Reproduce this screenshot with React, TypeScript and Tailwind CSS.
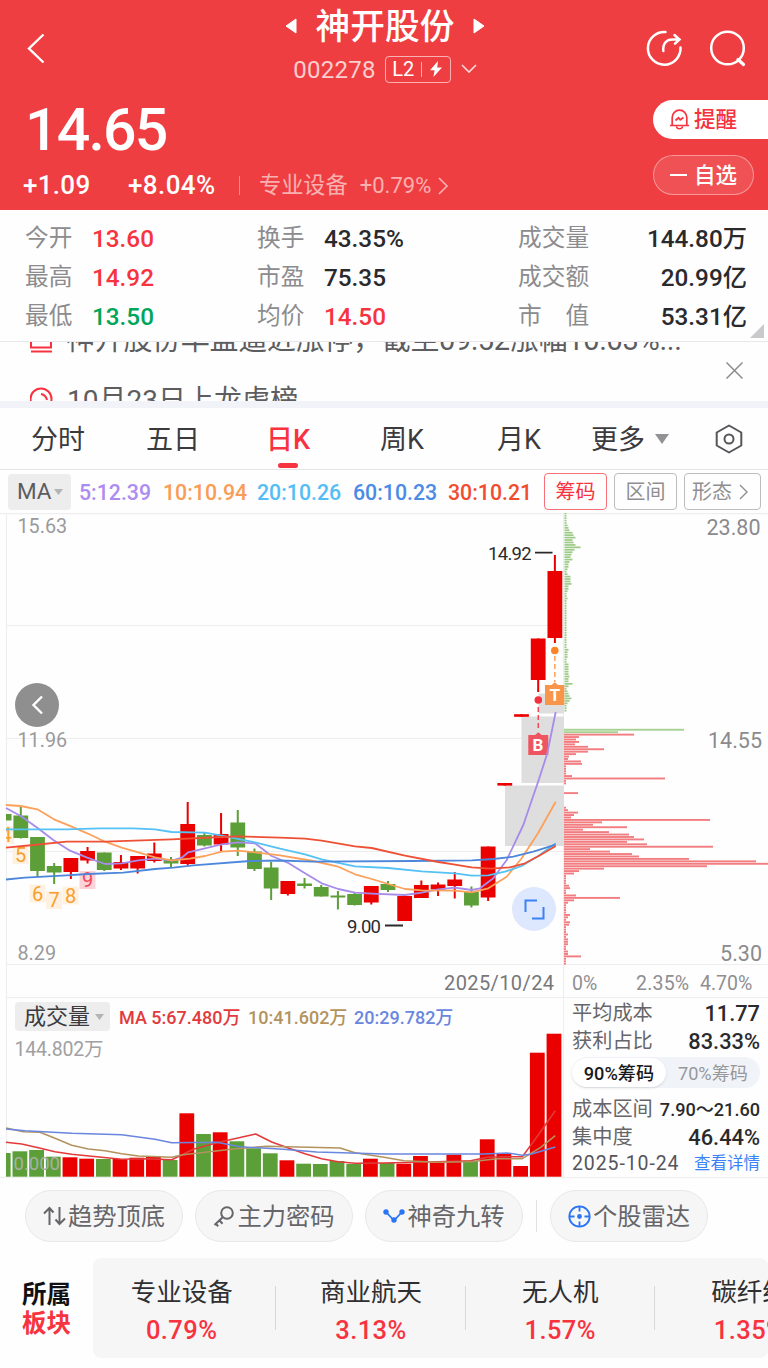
import type { ReactNode } from "react";

const UP = "#eb0000";
const DOWN = "#5c9e38";

// x of the first full candle and the distance between two candles
const FIRST_X = 20.8;
const STEP = 16.69;

// [body top, body bottom, high, low, rising, volume top]
const candles: [number, number, number, number, boolean, number][] = [
  [814, 820.5, 814, 820.5, false, 1153],
  [815.5, 838, 807, 838.5, false, 1151.3],
  [837, 871, 837, 877, false, 1150],
  [866, 872.5, 863, 884, false, 1156.7],
  [858, 872, 858, 879, true, 1157.3],
  [851, 860.5, 847, 863.5, true, 1158.7],
  [852.5, 870, 852.5, 871, false, 1159],
  [862, 868.5, 855, 870, true, 1159],
  [856, 868.5, 856, 873.5, true, 1157.7],
  [853.5, 861, 842.5, 862.5, true, 1156.3],
  [859, 863.5, 857, 868, false, 1160],
  [824, 864, 802, 865, true, 1113.3],
  [835, 845.5, 833, 846.5, false, 1134],
  [834, 844.5, 813, 851.5, true, 1132.3],
  [822.5, 847.5, 810, 856, false, 1141.3],
  [851.5, 869, 848.5, 871, false, 1148.3],
  [867.5, 888.5, 862, 900, false, 1153.3],
  [881, 894, 881, 895.5, true, 1160.3],
  [883.5, 886, 878, 888.5, false, 1163.7],
  [887, 896.5, 885, 896.5, false, 1164],
  [895.5, 897.5, 891, 909.5, false, 1161],
  [894, 905, 893, 905.5, false, 1164],
  [886, 902.5, 886, 904.5, true, 1158.7],
  [884, 890, 881, 892, false, 1163],
  [896, 921, 894.5, 921, true, 1163.7],
  [885, 898, 880.5, 898, true, 1156],
  [884.5, 889.5, 882.5, 896, true, 1163],
  [879.5, 886, 872, 898.5, true, 1154.7],
  [892, 905.5, 886.5, 907.5, false, 1160.7],
  [846.5, 897.5, 846.5, 901, true, 1139.3],
  [783, 785.6, 783, 785.6, true, 1154],
  [714.2, 716.8, 714.2, 716.8, true, 1166],
  [638.5, 680, 638.5, 692, true, 1052.7],
  [571, 638, 555, 643, true, 1033.7],
];

const maLines = [
  {
    color: "#a78bea",
    points:
      "6,808 20.7,816 37.3,827.7 53.3,840 70,850.7 87.3,857.7 105,864 121.7,863.3 138.3,860.3 155,858.7 171.7,860.7 181.7,857.7 188.3,852.3 205,848.3 221.7,844.3 238.3,842.3 255,843.3 271.7,856 288.3,863 305,873.3 321.7,883.3 338.3,889 355,892.7 371.7,893.7 405,895 421.7,892.7 438.3,889.3 455,887.7 471.7,890 480,888.3 493.3,878.3 506.7,860 523.3,825 538.7,780 547.3,753.3 555.7,712",
  },
  {
    color: "#fba15c",
    points:
      "6,805 20.7,806 37.3,809.3 54,819.3 71.7,826.7 87.3,833.3 105,841.7 121.7,847.7 138.3,852.3 155,857.3 171.7,860.3 190,858.7 205,856 221.7,851.7 238.3,850.7 255,852.3 280,855.3 313.3,861 338.3,866.7 355,874.3 371.7,879 388.3,884 405,889 421.7,890.3 455,890.7 471.7,892.3 488.3,888.3 506.7,876.7 521.7,858.3 538.3,832.7 555.7,801.7",
  },
  {
    color: "#55c1f5",
    points:
      "6,829.3 66.7,829.3 100,828.3 133.3,828.3 155,829.3 171.7,832 205,832.7 221.7,835.7 255,842.3 280,848.7 305,854.3 321.7,859.3 355,866.3 388.3,868 421.7,871.3 455,873.3 471.7,875.7 488.3,875.3 505,871.7 521.7,866 538.3,856 555.7,843.3",
  },
  {
    color: "#4d87dc",
    points:
      "6,879.5 25,877.7 66.7,875.3 88.3,874 123.3,872.7 155,869 173.3,867.7 193.3,865.3 250,861 280,860.5 313.3,861.7 413.3,861 471.7,860.3 493.3,859 513.3,856.7 533.3,851.7 555.7,844.7",
  },
  {
    color: "#ee5036",
    points:
      "6,847.7 33.3,845 66.7,841.7 105,841.7 171.7,839.3 221.7,837 238.3,836.3 280,837.7 305,838.7 321.7,840.7 355,846.3 371.7,848 405,855.7 438.3,862 455,864.7 471.7,867.3 490,868.7 510,867.3 525,863.3 540,855.3 555.7,846",
  },
];

const volumeLines = [
  {
    color: "#e23a3c",
    points:
      "6,1142.3 21.7,1144 38.3,1147.7 55,1151.7 71.7,1154.3 121.7,1159.3 146.7,1158.7 171.7,1159.7 180,1155.7 193.3,1149.3 216.7,1142.7 255.7,1134 271.7,1142 288.3,1148 305,1153.7 321.7,1158.7 338.3,1161.7 355,1163.3 384,1163 437.3,1161.7 470.7,1160.7 487.3,1157.3 507.3,1156.7 522.3,1156.7 539,1134 555.3,1110.7",
  },
  {
    color: "#b3935d",
    points:
      "6,1128 23.3,1131.7 40,1132.3 55,1138.3 71.7,1145.3 88.3,1149 105,1150.7 121.7,1153.7 138.3,1156 171.7,1157.3 183.3,1154.7 233.3,1149 266.7,1146.3 340,1148 355,1152.7 384,1157.3 404,1160.7 437.3,1162.3 470.7,1161.7 497.3,1158.7 522.3,1158.7 540.7,1147.3 555.3,1135.7",
  },
  {
    color: "#6a86df",
    points:
      "6,1129 25,1130.7 71.7,1133.3 121.7,1134.7 138.3,1137 155,1139.3 171.7,1142.7 216.7,1142.3 240,1146.7 283.3,1149.3 316.7,1152 384,1154 484,1154 507.3,1153 522.3,1155.3 530.7,1154.3 555.3,1147",
  },
];

const chipsAbove = [
  2, 2, 2, 2, 2, 3, 4, 5, 8, 9, 11, 8, 9, 11, 16, 10, 8, 7, 6, 8, 5, 4, 4, 3, 2,
  3, 6, 6, 6, 7, 4, 4, 3, 2, 2, 3, 2, 2, 2, 2, 2, 2, 2, 2, 2, 2, 2, 2, 2, 2, 2, 2,
  2, 2, 2, 2, 4, 3, 3, 3, 2, 2, 4, 4, 4, 4, 4, 5, 4, 4, 8, 4, 2, 3, 4, 5, 7, 5, 3,
  2, 2, 2,
];

const chipsBelow = [
  120, 54, 70, 15, 12, 15, 11, 24, 40, 24, 12, 5, 4, 17, 18, 2, 2, 2, 2, 8, 101,
  2, 2, 0, 0, 0, 14, 0, 0, 0, 0, 0, 2, 4, 14, 10, 7, 146, 38, 29, 63, 19, 45, 65,
  70, 80, 63, 83, 149, 26, 46, 68, 75, 125, 192, 204, 143, 40, 15, 10, 2, 2, 2,
  2, 5, 6, 2, 2, 12, 56, 10, 4, 2, 2, 2, 2, 6, 4, 2, 6, 5, 2, 2, 2, 4, 2, 4, 4, 4,
  2, 2, 4, 4, 17, 2, 2, 2,
];

const Header = () => (
  <header className="flex h-[210px] flex-col bg-[#ef3e41] text-white">
    <div className="flex h-[97px] items-start justify-between pr-[22px] pl-[27px]">
      <svg width="100" height="97" fill="none" stroke="currentColor" strokeWidth="2.4">
        <path d="M16.5 34.5 2 48.5l14.500 14" />
      </svg>
      <div className="flex flex-col items-center pt-[5px] pr-[3px]">
        <div className="flex h-[42px] items-center gap-[19px]">
          <svg width="12" height="16" fill="currentColor">
            <path d="M11 1v14L1 8Z" stroke="currentColor" strokeLinejoin="round" />
          </svg>
          <h1 className="pt-[2px] text-[34.7px] leading-[42px] font-medium">神开股份</h1>
          <svg width="12" height="16" fill="currentColor">
            <path d="M1 1v14l10-7Z" stroke="currentColor" strokeLinejoin="round" />
          </svg>
        </div>
        <div className="mt-[6px] flex h-[32px] items-center">
          <span className="pt-[2px] text-[24px] tracking-[0.3px] text-white/75">002278</span>
          <span className="ml-[9px] flex h-[27px] w-[66px] items-center justify-center gap-[7px] rounded border border-white/60 text-[20px]">
            L2
            <i className="h-[15px] w-px bg-white/60" />
            <svg width="14" height="16" fill="currentColor">
              <path d="M9 0 1 9.2h4.600L4.400 16 13 6.400H8.200Z" />
            </svg>
          </span>
          <svg className="ml-[10px]" width="16" height="10" fill="none" stroke="#ffffffcc" strokeWidth="1.6">
            <path d="m1 1 7 7 7-7" />
          </svg>
        </div>
      </div>
      <svg className="mt-[28px]" width="100" height="42" fill="none" stroke="currentColor" strokeWidth="2.5" strokeLinecap="round">
        <path d="M19.500 4.100A16.300 16.300 0 1 0 34.500 19.500" />
        <path d="M17.300 23c-.6-7.500 3-11.500 9.200-11.500h7M28.500 7l5 4.500-4.500 4.200" />
        <circle cx="81.500" cy="20" r="16.300" />
        <path d="m92 31.500 5.500 5" strokeWidth="3.200" />
      </svg>
    </div>
    <div className="flex h-[113px] justify-between">
      <div className="flex flex-col">
        <strong className="pt-[3px] pl-[25px] text-[59px] leading-[60px] font-medium tracking-[-1.8px]">
          14.65
        </strong>
        <div className="flex h-[34px] items-center pt-[17px] pl-[23px] text-[26px]">
          <span className="w-[105px] font-medium tracking-[0.3px]">+1.09</span>
          <span className="w-[111px] font-medium tracking-[0.4px]">+8.04%</span>
          <i className="h-[19px] w-px bg-white/40" />
          <span className="pl-[19px] text-[22.2px] text-white/60">专业设备</span>
          <span className="pl-[12px] text-[22px] text-white/60">+0.79%</span>
          <svg className="ml-[6px]" width="12" height="18" fill="none" stroke="#ffffff99" strokeWidth="1.6">
            <path d="m2 1 8 8-8 8" />
          </svg>
        </div>
      </div>
      <div className="flex w-[115px] flex-col gap-[16px] pt-[3px]">
        <button className="flex h-[39px] items-center rounded-l-full bg-white pl-[16px] text-[21.6px] font-medium text-[#f5333f]">
          <svg width="21" height="23" fill="none" stroke="currentColor" strokeWidth="1.7">
            <path d="M1 17.500h19M3.200 17V9.500a7.300 7.300 0 0 1 14.600 0V17M7.500 18.500c.4 3 5.600 3 6 0M6.500 12.500l3-2.700 1.700 2 3.300-2.300" />
          </svg>
          <span className="pt-[2px] pl-[4px]">提醒</span>
        </button>
        <button className="mr-[14px] flex h-[40px] items-center rounded-full border border-white/40 bg-white/10 pl-[16px] text-[21.5px] font-medium">
          <i className="mr-[7px] h-[2px] w-[17px] bg-white" />
          <span className="pt-[2px]">自选</span>
        </button>
      </div>
    </div>
  </header>
);

const Quote = ({ label, value, tone = "text-[#2a2a2d]", width = "" }: {
  label: string;
  value: string;
  tone?: string;
  width?: string;
}) => (
  <div className="flex h-[39px] items-center leading-[28px]">
    <span className={`text-[23.7px] whitespace-pre text-[#8c8c8f] ${width}`}>{label}</span>
    <span className={`pt-[2px] text-[24.3px] font-medium ${tone}`}>{value}</span>
  </div>
);

const Quotes = () => (
  <section className="relative grid h-[132px] grid-cols-[232px_261px_1fr] border-b border-[#e8e8ea] pt-[8px] pl-[25px]">
    <div>
      <Quote label="今开" value="13.60" tone="text-[#f7333f]" width="w-[67px]" />
      <Quote label="最高" value="14.92" tone="text-[#f7333f]" width="w-[67px]" />
      <Quote label="最低" value="13.50" tone="text-[#00a65a]" width="w-[67px]" />
    </div>
    <div>
      <Quote label="换手" value="43.35%" width="w-[67px]" />
      <Quote label="市盈" value="75.35" width="w-[67px]" />
      <Quote label="均价" value="14.50" tone="text-[#f7333f]" width="w-[67px]" />
    </div>
    <div className="pr-[21px] [&>div]:justify-between">
      <Quote label="成交量" value="144.80万" />
      <Quote label="成交额" value="20.99亿" />
      <Quote label="市　值" value="53.31亿" />
    </div>
    <svg className="absolute right-[4px] bottom-[3px]" width="14" height="14" fill="#c9c9cb">
      <path d="M14 0v14H0Z" />
    </svg>
  </section>
);

// The ticker is caught halfway between two headlines
const News = () => (
  <section className="flex h-[59px] justify-between overflow-hidden text-[#5d5d60]">
    <div className="-mt-[21px] flex flex-col">
      <div className="flex h-[52px] shrink-0 items-start pl-[30px]">
        <svg width="23" height="34" fill="none" stroke="#f7333f" strokeWidth="2">
          <path d="M1 4v22.500h20V4M1 30.500h21M6 10h11M6 16h11" />
        </svg>
        <p className="-mt-px pl-[13px] text-[29px] leading-[40px] tracking-[-0.3px] whitespace-nowrap">
          神开股份早盘逼近涨停，截至09:52涨幅10.03%...
        </p>
      </div>
      <div className="flex h-[52px] shrink-0 items-start pl-[30px]">
        <svg className="mt-[14px]" width="23" height="34" fill="none" stroke="#f7333f" strokeWidth="2">
          <circle cx="11" cy="12" r="10.500" />
          <path d="M11 7q5 1 6 6" />
        </svg>
        <p className="pt-[8px] pl-[14px] text-[28px] leading-[40px]">
          10月23日上龙虎榜
        </p>
      </div>
    </div>
    <svg className="mt-[20px] mr-[25px]" width="17" height="17" fill="none" stroke="#8c8c8f" strokeWidth="1.5">
      <path d="m.5.5 16 16m0-16-16 16" />
    </svg>
  </section>
);

const Tabs = () => (
  <nav className="flex h-[62px] items-center border-b border-[#e4e4e6] pl-[31px] text-[27px] text-[#3b3b3e] [&>span]:pt-[4px]">
    <span className="w-[115px]">分时</span>
    <span className="w-[120px]">五日</span>
    <span className="relative flex h-full w-[114px] items-center font-medium text-[#f7333f]">
      日K
      <i className="absolute bottom-px left-[12px] h-[5px] w-[20px] rounded-full bg-[#f7333f]" />
    </span>
    <span className="w-[117px]">周K</span>
    <span className="w-[94px]">月K</span>
    <span className="w-[64px]">更多</span>
    <svg width="14" height="10" fill="#929295">
      <path d="M0 0h14L7 10Z" />
    </svg>
    <svg className="ml-[46px]" width="28" height="30" fill="none" stroke="#56565a" strokeWidth="2" strokeLinejoin="round">
      <path d="m14 1.500 12.300 7v13L14 28.500l-12.300-7v-13Z" />
      <circle cx="14" cy="15" r="4.500" />
    </svg>
  </nav>
);

const Averages = () => (
  <div className="flex h-[43px] items-center pl-[8px] text-[21.3px] font-medium">
    <button className="mr-[8px] flex h-[36px] w-[63px] items-center gap-[2px] rounded bg-[#ededee] pl-[9px] text-[22.5px] font-normal text-[#5d5d60]">
      MA
      <svg width="9" height="6" fill="#b4b4b6">
        <path d="M0 0h9L4.500 6Z" />
      </svg>
    </button>
    <span className="w-[84px] pt-[2px] text-[#ac8cf0]">5:12.39</span>
    <span className="w-[94px] pt-[2px] text-[#f99c56]">10:10.94</span>
    <span className="w-[96px] pt-[2px] text-[#54bdf5]">20:10.26</span>
    <span className="w-[95px] pt-[2px] text-[#4b8ae6]">60:10.23</span>
    <span className="w-[96px] pt-[2px] text-[#f04d30]">30:10.21</span>
    <div className="flex gap-[7px] text-[20px] font-normal text-[#8f8f92]">
      <button className="h-[37px] w-[63px] rounded border border-[#f7333f]/70 text-[#f7333f]">筹码</button>
      <button className="h-[37px] w-[63px] rounded border border-[#bdbdc0]">区间</button>
      <button className="flex h-[37px] w-[77px] items-center gap-[7px] rounded border border-[#bdbdc0] pl-[7px]">
        形态
        <svg width="10" height="16" fill="none" stroke="currentColor" strokeWidth="1.4">
          <path d="m1 1 7 7-7 7" />
        </svg>
      </button>
    </div>
  </div>
);

const TurnMark = ({ x, y, children, hot }: { x: number; y: number; children: ReactNode; hot?: boolean }) => (
  <g textAnchor="middle" fontSize="20">
    <rect x={x - 8} y={y - 9} width="16" height="18" fill={hot ? "#fbd3d8" : "#fff1e2"} />
    <text x={x} y={y + 7} fill={hot ? "#f2485a" : "#f6a02c"}>{children}</text>
  </g>
);

const PriceChart = () => (
  <section className="relative">
    <svg className="block" width="768" height="485" viewBox="0 513 768 485">
      <path
        d="M0 513.600h768M6.500 625.500h557M6.500 738.500h557M6.500 851.500h557M6.500 964.500h761M6.500 997.500h761M6.500 513v485M563.500 513v485"
        stroke="#eeeeef"
        strokeWidth="1.2"
      />
      <g fill="#dedede">
        <rect x="505" y="785.5" width="59" height="60.5" />
        <rect x="521.5" y="716.5" width="42.5" height="66.5" />
        <rect x="538.5" y="693.5" width="25.5" height="20" />
      </g>
      {chipsAbove.map((w, i) => (
        <rect key={i} x="564.5" y={512.4 + i * 2.437} width={w} height="1.7" fill="#9cca86" />
      ))}
      {chipsBelow.map((w, i) => (
        <rect key={i} x="564" y={728.8 + i * 2.437} width={w} height="1.9" fill={i < 2 ? "#a6d192" : "#f27d80"} />
      ))}
      <TurnMark x={6} y={835}>4</TurnMark>
      <TurnMark x={20.5} y={855}>5</TurnMark>
      <TurnMark x={37.5} y={893.5}>6</TurnMark>
      <TurnMark x={54} y={900}>7</TurnMark>
      <TurnMark x={70.5} y={895.5}>8</TurnMark>
      <TurnMark x={87.5} y={880}  hot>9</TurnMark>
      <rect x="0" y="800" width="6" height="60" fill="#fefefe" />
      {candles.map(([top, bottom, high, low, rising], i) => {
        const x = FIRST_X + (i - 1) * STEP;
        const left = Math.max(x - 7.4, 6);
        return (
          <g key={i} fill={rising ? UP : DOWN}>
            {i > 0 && <rect x={x - 1} y={high} width="2" height={low - high} />}
            <rect x={left} y={top} width={x + 7.4 - left} height={bottom - top} />
          </g>
        );
      })}
      <g strokeWidth="1.5" strokeDasharray="5 3">
        <path d="M554.800 656v26" stroke="#fba15c" />
        <path d="M538.300 707v24" stroke="#f2485a" />
      </g>
      <circle cx="554.8" cy="650.5" r="3.8" fill="#fb8427" />
      <circle cx="538.3" cy="700" r="3.8" fill="#f2333f" />
      <path d="M545 685h6.500l3.300-2.800 3.300 2.800h6.200v20H545Z" fill="#f9944b" />
      <path d="M528.300 735h6.700l3.300-2.800 3.300 2.800h6.700v20h-20Z" fill="#ee5560" />
      <g fill="#fff" fontSize="17" fontWeight="700" textAnchor="middle">
        <text x="554.8" y="701.3">T</text>
        <text x="538" y="751">B</text>
      </g>
      <g fill="none" strokeWidth="1.8" strokeLinejoin="round">
        {maLines.map((line) => (
          <polyline key={line.color} points={line.points} stroke={line.color} />
        ))}
      </g>
      <g fill="#2a2a2d" fontSize="18.5">
        <text x="488" y="560" letterSpacing="-0.7">14.92</text>
        <text x="347" y="932.5" letterSpacing="-0.7">9.00</text>
        <path d="M535 552.700h17.500M385 925.500h18" stroke="#2a2a2d" strokeWidth="1.8" />
      </g>
      <g fill="#9a9a9d" fontSize="19.8">
        <text x="17.5" y="533">15.63</text>
        <text x="17.5" y="747">11.96</text>
        <text x="17.5" y="960">8.29</text>
      </g>
      <g fill="#8b8b8e" fontSize="21.5" textAnchor="end">
        <text x="760.5" y="534.5">23.80</text>
        <text x="762" y="748">14.55</text>
        <text x="762" y="961">5.30</text>
      </g>
      <text x="444" y="989.5" fill="#77777a" fontSize="20" letterSpacing="0.4">2025/10/24</text>
      <g fill="#8f8f92" fontSize="19.5">
        <text x="572" y="989.5">0%</text>
        <text x="636" y="989.5" letterSpacing="0.2">2.35%</text>
        <text x="700" y="989.5">4.70%</text>
      </g>
    </svg>
    <button className="absolute top-[170px] left-[15px] flex size-[44px] items-center justify-center rounded-full bg-[#8f8f90]">
      <svg width="12" height="20" fill="none" stroke="#fff" strokeWidth="2.4">
        <path d="m11 1.500-8.500 8.500 8.500 8.500" />
      </svg>
    </button>
    <button className="absolute top-[374px] left-[512px] flex size-[44px] items-center justify-center rounded-full bg-[#dde7fd]">
      <svg width="21" height="21" fill="none" stroke="#3b82f6" strokeWidth="2">
        <path d="M1.500 13V1.500H13M19.500 8v11.500H8" />
      </svg>
    </button>
  </section>
);

const VolumeChart = () => (
  <div className="relative w-[564px]">
    <svg className="block" width="564" height="180" viewBox="0 998 564 180">
      <path d="M6.500 998v180M563.500 998v180M0 1177.400h564" stroke="#eeeeef" strokeWidth="1.2" />
      {candles.map(([, , , , rising, top], i) => {
        const x = FIRST_X - 0.9 + (i - 1) * STEP;
        const left = Math.max(x - 7.4, 6);
        return (
          <rect key={i} x={left} y={top} width={x + 7.4 - left} height={1176.7 - top} fill={rising ? UP : DOWN} />
        );
      })}
      <g fill="none" strokeWidth="1.5" strokeLinejoin="round">
        {volumeLines.map((line) => (
          <polyline key={line.color} points={line.points} stroke={line.color} />
        ))}
      </g>
      <text x="13.5" y="1170" fill="#a9b0a4" fontSize="18.5">0.000</text>
      <text x="14.5" y="1056" fill="#a0a0a3" fontSize="19.5" textLength="89">144.802万</text>
    </svg>
    <div className="absolute top-[4px] left-[15px] flex h-[29px] items-center text-[18px] font-medium">
      <button className="mr-[9px] flex h-[29px] w-[95px] items-center gap-[5px] rounded bg-[#ededee] pl-[9px] text-[22px] font-normal text-[#3b3b3e]">
        成交量
        <svg width="9" height="6" fill="#b4b4b6">
          <path d="M0 0h9L4.500 6Z" />
        </svg>
      </button>
      <span className="w-[129px] pt-px text-[#e23a3c]">MA 5:67.480万</span>
      <span className="w-[106px] pt-px text-[#b3935d]">10:41.602万</span>
      <span className="pt-px text-[#6a86df]">20:29.782万</span>
    </div>
  </div>
);

const CostRow = ({ label, value, small }: { label: string; value: string; small?: boolean }) => (
  <div className="flex h-[28px] items-center justify-between whitespace-nowrap">
    <span className="pt-[2px] text-[20.2px] leading-[26px] text-[#66666a]">{label}</span>
    <span className={`pt-[3px] leading-[25px] font-medium text-[#2a2a2d] ${small ? "text-[18.1px]" : "text-[21.8px]"}`}>
      {value}
    </span>
  </div>
);

const CostPanel = () => (
  <div className="flex-1 border-b border-[#eeeeef] px-[8px]">
    <CostRow label="平均成本" value="11.77" />
    <CostRow label="获利占比" value="83.33%" />
    <div className="mt-[3px] mb-[6px] flex h-[31px] items-center rounded-full bg-[#f0f3f8] text-[18.2px]">
      <span className="flex h-[29px] w-[94px] items-center justify-center rounded-full bg-white pt-[2px] font-medium text-[#19191b] shadow-sm">
        90%筹码
      </span>
      <span className="flex-1 pt-[2px] text-center text-[#98989b]">70%筹码</span>
    </div>
    <CostRow label="成本区间" value="7.90～21.60" small />
    <CostRow label="集中度" value="46.44%" />
    <div className="flex h-[28px] items-center justify-between">
      <span className="text-[19.5px] tracking-[0.9px] text-[#55555a]">2025-10-24</span>
      <a className="text-[16.5px] text-[#3b82f6]">查看详情</a>
    </div>
  </div>
);

const Pill = ({ icon, children }: { icon: ReactNode; children: ReactNode }) => (
  <button className="flex h-[52px] w-[158px] shrink-0 items-center justify-center gap-[2px] rounded-full border border-[#e8e8e9] bg-[#f6f6f6] text-[24.3px] text-[#66666a]">
    {icon}
    <span className="pt-[2px]">{children}</span>
  </button>
);

const Tools = () => (
  <div className="flex items-center gap-[12px] pt-[12px] pl-[25px]">
    <Pill
      icon={
        <svg width="23" height="20" fill="none" stroke="currentColor" strokeWidth="2">
          <path d="M6.500 19V2M1 7.500 6.500 2l4 4.500M16.500 1v17M12.500 13.500l4 4.500 5.500-5.500" />
        </svg>
      }
    >
      趋势顶底
    </Pill>
    <Pill
      icon={
        <svg width="22" height="22" fill="none" stroke="currentColor" strokeWidth="2">
          <circle cx="14" cy="8" r="5.800" />
          <path d="M10 12 1.500 20M6.500 15.500l3 3.200M2.800 18.800l2.400 2.500" />
        </svg>
      }
    >
      主力密码
    </Pill>
    <Pill
      icon={
        <svg width="22" height="16" fill="#2b74f6" stroke="#2b74f6" strokeWidth="1.8">
          <path d="m3 4 8 8.500L19 4" fill="none" />
          <circle cx="3" cy="4" r="1.800" />
          <circle cx="11" cy="12" r="1.800" />
          <circle cx="19" cy="4" r="1.800" />
        </svg>
      }
    >
      神奇九转
    </Pill>
    <i className="mx-px h-[32px] w-px bg-[#e2e2e4]" />
    <Pill
      icon={
        <svg width="23" height="23" fill="none" stroke="#2b74f6" strokeWidth="1.8">
          <circle cx="11.500" cy="11.500" r="10.200" />
          <path d="M11.500 1v5.500M11.500 16.500V22M1 11.500h5.500M16.500 11.500H22" />
          <circle cx="11.500" cy="11.500" r="1.500" fill="#2b74f6" />
        </svg>
      }
    >
      个股雷达
    </Pill>
  </div>
);

const sectors = [
  { name: "专业设备", change: "0.79%" },
  { name: "商业航天", change: "3.13%" },
  { name: "无人机", change: "1.57%" },
  { name: "碳纤维", change: "1.35%" },
];

const Sectors = () => (
  <section className="mt-[16px] flex items-center">
    <h2 className="w-[93px] shrink-0 pt-[2px] pl-[22px] text-[24.5px] leading-[29px] font-bold text-[#111113]">
      所属
      <br />
      <span className="text-[#f7333f]">板块</span>
    </h2>
    <div className="flex h-[100px] flex-1 items-center overflow-hidden rounded-lg bg-[#f6f6f7]">
      <div className="-ml-[6px] flex pt-[5px]">
        {sectors.map((sector, i) => (
          <div
            key={sector.name}
            className="relative flex w-[189.3px] shrink-0 flex-col items-center"
          >
            <span className="text-[25.5px] leading-[38px] text-[#2f2f32]">{sector.name}</span>
            <span className="text-[25.5px] leading-[38px] font-medium tracking-[0.4px] text-[#f7333f]">{sector.change}</span>
            {i < 3 && <i className="absolute top-[13px] right-0 h-[44px] w-px bg-[#d8d8da]" />}
          </div>
        ))}
      </div>
    </div>
  </section>
);

export default function App() {
  return (
    <main className="h-[1368px] w-[768px] overflow-hidden bg-[#fefefe] font-[Roboto,'Noto_Sans_CJK_SC',sans-serif]">
      <Header />
      <Quotes />
      <News />
      <div className="h-[7px] bg-[#f1f3f9]" />
      <Tabs />
      <Averages />
      <PriceChart />
      <section className="flex h-[180px]">
        <VolumeChart />
        <CostPanel />
      </section>
      <Tools />
      <Sectors />
    </main>
  );
}
